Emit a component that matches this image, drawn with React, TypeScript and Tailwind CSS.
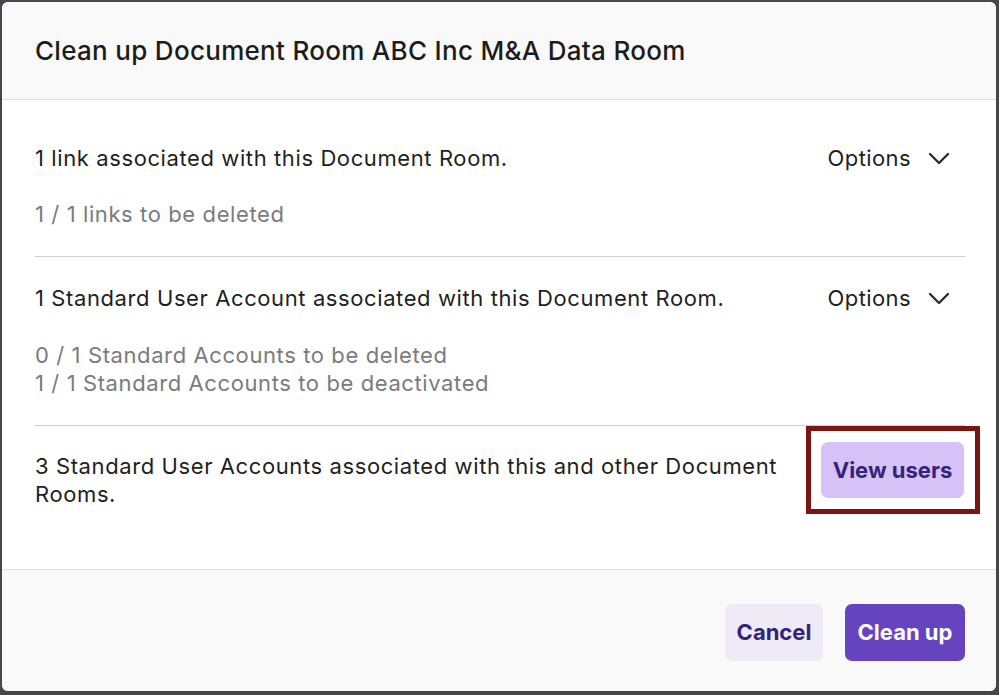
function OptionsButton() {
  return (
    <button className="flex items-center gap-[17px] pr-[15px] text-[22px] tracking-[0.4px] leading-[28px] text-[#1f1f1f]">
      Options
      <svg width="22" height="13" viewBox="0 0 22 13" fill="none" stroke="#2a2a2a" strokeWidth="2.3" strokeLinecap="round" strokeLinejoin="round">
        <path d="M2 2l9 9 9-9" />
      </svg>
    </button>
  )
}

export default function App() {
  return (
    <div
      className="w-[999px] h-[695px] bg-[#46464b] pt-[2px] pl-[2px]"
      style={{ fontFamily: 'Inter, "Noto Sans", sans-serif' }}
    >
      <div className="w-[994px] h-[689px] rounded-[6px] overflow-hidden flex flex-col bg-white">
        {/* Header */}
        <div className="h-[98px] bg-[#f9f9f9] border-b border-[#dedede] px-[33px] flex items-center">
          <h1 className="text-[26px] font-medium text-[#1c1c1c] tracking-[0.3px]">
            Clean up Document Room ABC Inc M&amp;A Data Room
          </h1>
        </div>

        {/* Body */}
        <div className="flex-1 pl-[33px] pr-[31px] pt-[16px]">
          {/* Links */}
          <div className="pt-[28px] pb-[28px] border-b border-[#cfcfcf]">
            <div className="flex items-start justify-between">
              <p className="text-[22px] tracking-[0.6px] leading-[28px] text-[#1f1f1f]">
                1 link associated with this Document Room.
              </p>
              <OptionsButton />
            </div>
            <p className="mt-[28px] text-[22px] tracking-[0.6px] leading-[28px] text-[#7b7b7f]">
              1 / 1 links to be deleted
            </p>
          </div>

          {/* Standard accounts */}
          <div className="pt-[27px] pb-[28px] border-b border-[#cfcfcf]">
            <div className="flex items-start justify-between">
              <p className="text-[22px] tracking-[0.6px] leading-[28px] text-[#1f1f1f]">
                1 Standard User Account associated with this Document Room.
              </p>
              <OptionsButton />
            </div>
            <div className="mt-[29px] text-[22px] tracking-[0.6px] leading-[28px] text-[#7b7b7f]">
              <p>0 / 1 Standard Accounts to be deleted</p>
              <p>1 / 1 Standard Accounts to be deactivated</p>
            </div>
          </div>

          {/* Shared accounts */}
          <div className="pt-[26px] flex items-start justify-between">
            <p className="w-[760px] text-[22px] tracking-[0.6px] leading-[28px] text-[#1f1f1f]">
              3 Standard User Accounts associated with this and other Document Rooms.
            </p>
            <div className="relative mt-[-10px] mr-[1px]">
              <div className="absolute -left-[15px] -right-[16px] -top-[16px] -bottom-[16px] border-[5px] border-[#7b1511]" />
              <button className="relative h-[56px] w-[143px] rounded-[7px] bg-[#d6c2f7] text-[22px] font-bold text-[#33237a]">
                View users
              </button>
            </div>
          </div>
        </div>

        {/* Footer */}
        <div className="h-[122px] bg-[#f9f9f9] border-t border-[#dedede] px-[31px] flex items-center justify-end gap-[22px] pt-[3px]">
          <button className="h-[57px] w-[98px] rounded-[7px] bg-[#eeeaf6] text-[22px] font-bold text-[#33237a]">
            Cancel
          </button>
          <button className="h-[57px] w-[120px] rounded-[7px] bg-[#6644bf] text-[22px] font-bold text-white">
            Clean up
          </button>
        </div>
      </div>
    </div>
  )
}
